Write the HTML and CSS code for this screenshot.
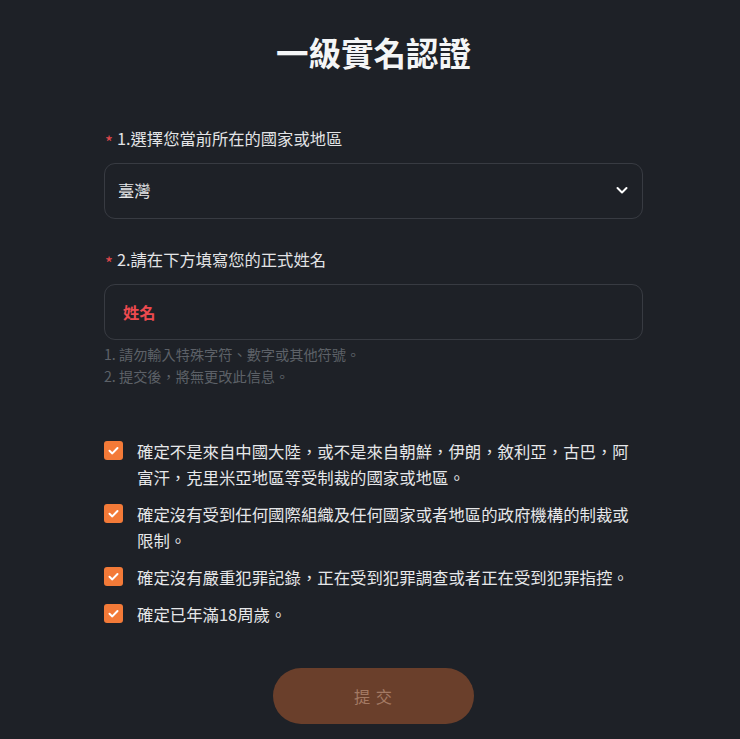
FILE: index.html
```html
<!DOCTYPE html>
<html lang="zh-Hant">
<head>
<meta charset="utf-8">
<title>一級實名認證</title>
<link rel="stylesheet" href="styles.css">
</head>
<body>
<main class="page">
  <h1 class="title">一級實名認證</h1>

  <div class="field field-first">
    <div class="label"><span class="star">*</span>1.選擇您當前所在的國家或地區</div>
    <div class="select">
      <span class="select-value">臺灣</span>
      <svg class="chevron" width="14" height="14" viewBox="0 0 14 14"><path d="M2.5 5 L7 9.5 L11.5 5" fill="none" stroke="#ffffff" stroke-width="2" stroke-linecap="round" stroke-linejoin="round"/></svg>
    </div>
  </div>

  <div class="field field-second">
    <div class="label"><span class="star">*</span>2.請在下方填寫您的正式姓名</div>
    <div class="input"><span class="placeholder">姓名</span></div>
    <div class="hints">
      <div>1. 請勿輸入特殊字符、數字或其他符號。</div>
      <div>2. 提交後，將無更改此信息。</div>
    </div>
  </div>

  <ul class="checks">
    <li class="check">
      <span class="box"><svg width="19" height="19" viewBox="0 0 19 19"><path d="M5.5 9.8 L8.3 12.4 L13.5 7" fill="none" stroke="#fff" stroke-width="2" stroke-linecap="round" stroke-linejoin="round"/></svg></span>
      <span class="check-text">確定不是來自中國大陸，或不是來自朝鮮，伊朗，敘利亞，古巴，阿富汗，克里米亞地區等受制裁的國家或地區。</span>
    </li>
    <li class="check">
      <span class="box"><svg width="19" height="19" viewBox="0 0 19 19"><path d="M5.5 9.8 L8.3 12.4 L13.5 7" fill="none" stroke="#fff" stroke-width="2" stroke-linecap="round" stroke-linejoin="round"/></svg></span>
      <span class="check-text">確定沒有受到任何國際組織及任何國家或者地區的政府機構的制裁或限制。</span>
    </li>
    <li class="check">
      <span class="box"><svg width="19" height="19" viewBox="0 0 19 19"><path d="M5.5 9.8 L8.3 12.4 L13.5 7" fill="none" stroke="#fff" stroke-width="2" stroke-linecap="round" stroke-linejoin="round"/></svg></span>
      <span class="check-text">確定沒有嚴重犯罪記錄，正在受到犯罪調查或者正在受到犯罪指控。</span>
    </li>
    <li class="check">
      <span class="box"><svg width="19" height="19" viewBox="0 0 19 19"><path d="M5.5 9.8 L8.3 12.4 L13.5 7" fill="none" stroke="#fff" stroke-width="2" stroke-linecap="round" stroke-linejoin="round"/></svg></span>
      <span class="check-text">確定已年滿18周歲。</span>
    </li>
  </ul>

  <div class="actions">
    <button class="submit" type="button">提 交</button>
  </div>
</main>
</body>
</html>
```

FILE: styles.css
```css
html, body {
  margin: 0;
  padding: 0;
  background: #1e2127;
}
body {
  font-family: "Noto Sans CJK TC", "Noto Sans", sans-serif;
  color: #e6e7e9;
}
.page {
  width: 539px;
  margin: 0 0 0 104px;
  padding-top: 30px;
  padding-bottom: 15px;
}
.title {
  margin: 0;
  text-align: center;
  font-size: 32.5px;
  line-height: 44px;
  font-weight: 700;
  color: #f4f5f6;
}
.field-first {
  margin-top: 52px;
}
.field-second {
  margin-top: 28px;
}
.label {
  font-size: 16.3px;
  line-height: 24px;
  color: #e3e4e6;
  display: flex;
  align-items: flex-start;
}
.star {
  flex: none;
  display: block;
  color: #e0484c;
  font-size: 17px;
  width: 13px;
  line-height: 24px;
  padding-top: 4px;
  height: 24px;
  box-sizing: border-box;
  margin-left: 1px;
  margin-right: -1px;
}
.select, .input {
  box-sizing: border-box;
  margin-top: 13px;
  height: 56px;
  border: 1px solid #383b42;
  border-radius: 11px;
  display: flex;
  align-items: center;
}
.select {
  justify-content: space-between;
  padding: 0 13px 2px 13px;
}
.select-value {
  font-size: 16.3px;
  color: #e6e7e9;
}
.chevron {
  display: block;
}
.input {
  padding: 0 18px 1px;
}
.placeholder {
  color: #ec4a4f;
  font-size: 16.3px;
  font-weight: 700;
}
.hints {
  margin-top: 3px;
  font-size: 14.2px;
  line-height: 22px;
  color: #5d6168;
}
.checks {
  list-style: none;
  margin: 51px 0 0 0;
  padding: 0;
  display: flex;
  flex-direction: column;
  gap: 11px;
}
.check {
  display: flex;
  align-items: flex-start;
  gap: 14px;
}
.box {
  flex: none;
  width: 19px;
  height: 19px;
  margin-top: 3px;
  border-radius: 3px;
  background: #f37a38;
  display: block;
}
.box svg {
  display: block;
}
.check-text {
  flex: 1;
  font-size: 16.4px;
  line-height: 26px;
  color: #e6e7e9;
}
.actions {
  margin-top: 41px;
  display: flex;
  justify-content: center;
}
.submit {
  width: 201px;
  height: 56px;
  border: none;
  border-radius: 28px;
  background: #6a3f2b;
  color: #a47a64;
  font-family: "Noto Sans CJK TC", "Noto Sans", sans-serif;
  font-size: 16.3px;
  letter-spacing: 1px;
  padding: 0;
}
```
